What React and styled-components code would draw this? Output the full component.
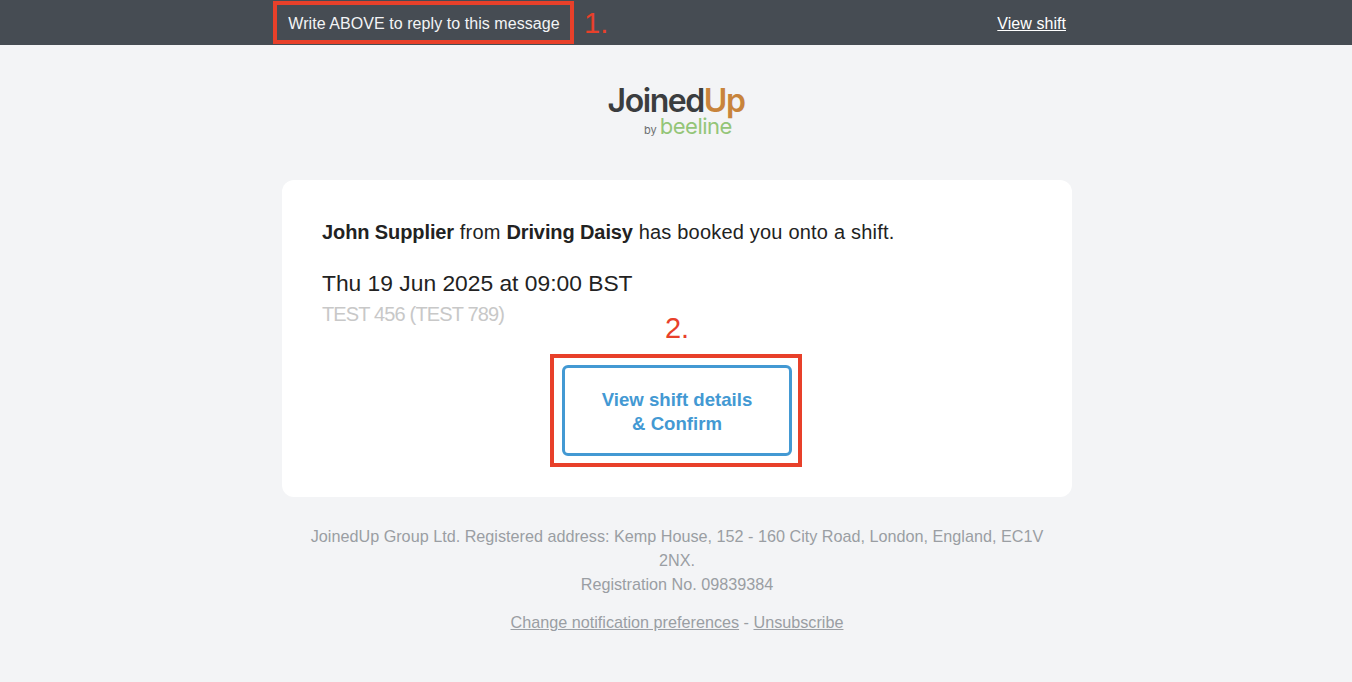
import React from "react";
import styled, { createGlobalStyle } from "styled-components";

const GlobalStyle = createGlobalStyle`
  html, body {
    margin: 0;
    padding: 0;
    background: #f3f4f6;
    font-family: "Liberation Sans", Arial, sans-serif;
  }
`;

const TopBar = styled.div`
  height: 45px;
  background: #464c53;
  display: flex;
  justify-content: center;
  box-sizing: border-box;
`;

const TopInner = styled.div`
  width: 792px;
  padding-right: 6px;
  box-sizing: border-box;
  display: flex;
  align-items: center;
  justify-content: space-between;
`;

const Notice = styled.div`
  display: flex;
  align-items: center;
  gap: 10px;
  margin-left: -7px;
`;

const Marked = styled.div`
  border: 4px solid #e8402a;
  box-sizing: border-box;
`;

const NoticeBox = styled(Marked)`
  width: 301px;
  height: 43px;
  padding: 2px 0 0 1px;
  display: flex;
  align-items: center;
  justify-content: center;
  color: #f3f4f6;
  font-size: 16px;
  letter-spacing: 0.06px;
`;

const StepNumber = styled.span`
  color: #e8402a;
  font-size: 29px;
  line-height: 30px;
`;

const TopLink = styled.a`
  color: #fff;
  font-size: 16px;
  padding-top: 2px;
  letter-spacing: 0.05px;
  text-decoration: underline;
`;

const Logo = styled.div`
  margin-top: 41px;
  height: 94px;
  display: flex;
  flex-direction: column;
  align-items: center;
`;

const LogoMain = styled.div`
  font-family: "Inter", sans-serif;
  font-size: 32px;
  font-weight: 600;
  line-height: 30px;
  letter-spacing: -1.45px;
  color: #3b3d3f;
`;

const LogoUp = styled.span`
  color: #c8843c;
`;

const LogoSub = styled.div`
  display: flex;
  align-items: baseline;
  gap: 3px;
  margin-left: 24px;
  font-family: "Inter", sans-serif;
  color: #6b6e70;
  font-size: 11px;
  line-height: 20px;
`;

const LogoBeeline = styled.span`
  color: #94c578;
  font-size: 22px;
  letter-spacing: -0.5px;
`;

const Card = styled.main`
  width: 790px;
  height: 317px;
  margin: 0 auto;
  transform: translateX(1px);
  box-sizing: border-box;
  padding: 40px;
  background: #fff;
  border-radius: 12px;
  color: #222;
`;

const Lead = styled.p`
  margin: 0;
  font-size: 20px;
  line-height: 24px;
  letter-spacing: 0.2px;
`;

const Strong = styled.b`
  letter-spacing: -0.1px;
`;

const DateLine = styled.div`
  margin-top: 25px;
  font-size: 22.8px;
  line-height: 28px;
`;

const Reference = styled.div`
  margin-top: 3px;
  color: #c8c8c8;
  font-size: 20px;
  line-height: 28px;
  letter-spacing: -0.85px;
`;

const Action = styled.div`
  margin-top: -15px;
  display: flex;
  flex-direction: column;
  align-items: center;
  gap: 11px;
`;

const ButtonBox = styled(Marked)`
  width: 252px;
  height: 113px;
  margin-right: 2px;
  padding-left: 2px;
  display: flex;
  align-items: center;
  justify-content: center;
`;

const ConfirmButton = styled.a`
  width: 230px;
  height: 91px;
  padding-top: 2px;
  box-sizing: border-box;
  border: 3px solid #4399d3;
  border-radius: 6px;
  display: flex;
  align-items: center;
  justify-content: center;
  text-align: center;
  color: #4399d3;
  font-size: 18.6px;
  font-weight: 700;
  line-height: 24px;
`;

const Footer = styled.footer`
  width: 790px;
  margin: 27px auto 0;
  transform: translateX(1px);
  padding: 0 20px;
  box-sizing: border-box;
  text-align: center;
  color: #9a9ea3;
  font-size: 16.2px;
  line-height: 24px;
`;

const FooterLinks = styled.div`
  margin-top: 14px;
`;

const FooterLink = styled.a`
  color: #9a9ea3;
  text-decoration: underline;
`;

export default function App() {
  return (
    <>
      <GlobalStyle />
      <TopBar>
        <TopInner>
          <Notice>
            <NoticeBox>Write ABOVE to reply to this message</NoticeBox>
            <StepNumber>1.</StepNumber>
          </Notice>
          <TopLink>View shift</TopLink>
        </TopInner>
      </TopBar>

      <Logo>
        <LogoMain>
          Joined<LogoUp>Up</LogoUp>
        </LogoMain>
        <LogoSub>
          by<LogoBeeline>beeline</LogoBeeline>
        </LogoSub>
      </Logo>

      <Card>
        <Lead>
          <Strong>John Supplier</Strong> from <Strong>Driving Daisy</Strong> has booked you onto a shift.
        </Lead>
        <DateLine>Thu 19 Jun 2025 at 09:00 BST</DateLine>
        <Reference>TEST 456 (TEST 789)</Reference>
        <Action>
          <StepNumber>2.</StepNumber>
          <ButtonBox>
            <ConfirmButton>
              View shift details
              <br />
              &amp; Confirm
            </ConfirmButton>
          </ButtonBox>
        </Action>
      </Card>

      <Footer>
        JoinedUp Group Ltd. Registered address: Kemp House, 152 - 160 City Road, London, England, EC1V 2NX.
        <br />
        Registration No. 09839384
        <FooterLinks>
          <FooterLink>Change notification preferences</FooterLink> - <FooterLink>Unsubscribe</FooterLink>
        </FooterLinks>
      </Footer>
    </>
  );
}
